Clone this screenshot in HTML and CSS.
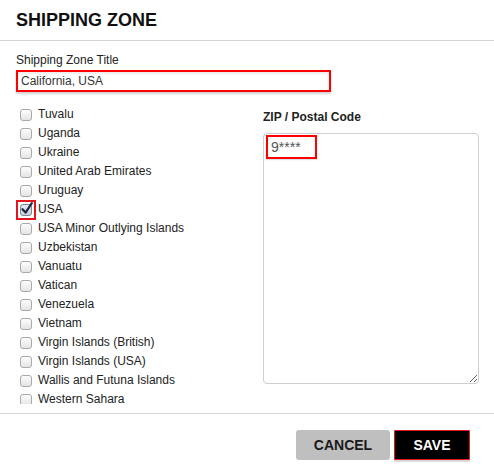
FILE: index.html
```html
<!DOCTYPE html>
<html>
<head>
<meta charset="utf-8">
<link rel="stylesheet" href="styles.css">
</head>
<body>
<div class="modal">
  <div class="header"><h1 class="title">SHIPPING ZONE</h1></div>
  <div class="body">
    <label class="field-label">Shipping Zone Title</label>
    <div class="text-input">California, USA</div>
    <div class="columns">
      <ul class="country-list">
        <li class="row"><span class="box"></span>Tuvalu</li>
        <li class="row"><span class="box"></span>Uganda</li>
        <li class="row"><span class="box"></span>Ukraine</li>
        <li class="row"><span class="box"></span>United Arab Emirates</li>
        <li class="row"><span class="box"></span>Uruguay</li>
        <li class="row"><span class="box checked"><span class="mark"></span><svg class="tick" width="14" height="14" viewBox="0 0 14 14"><path d="M2.5 7.2 L5.6 10.6 L11.8 1.2" fill="none" stroke="#1d2940" stroke-width="2.2" stroke-linecap="round" stroke-linejoin="round"/></svg></span>USA</li>
        <li class="row"><span class="box"></span>USA Minor Outlying Islands</li>
        <li class="row"><span class="box"></span>Uzbekistan</li>
        <li class="row"><span class="box"></span>Vanuatu</li>
        <li class="row"><span class="box"></span>Vatican</li>
        <li class="row"><span class="box"></span>Venezuela</li>
        <li class="row"><span class="box"></span>Vietnam</li>
        <li class="row"><span class="box"></span>Virgin Islands (British)</li>
        <li class="row"><span class="box"></span>Virgin Islands (USA)</li>
        <li class="row"><span class="box"></span>Wallis and Futuna Islands</li>
        <li class="row"><span class="box"></span>Western Sahara</li>
      </ul>
      <div class="zip-col">
        <div class="zip-label">ZIP / Postal Code</div>
        <div class="textarea"><span class="zip-entry">9****</span></div>
      </div>
    </div>
  </div>
  <div class="footer">
    <button class="btn btn-cancel">CANCEL</button>
    <button class="btn btn-save">SAVE</button>
  </div>
</div>
</body>
</html>
```

FILE: styles.css
```css
* { box-sizing: border-box; }
html, body { margin: 0; padding: 0; background: #fff; }
body {
  font-family: "Liberation Sans", Arial, sans-serif;
  color: #222;
  width: 494px;
  height: 476px;
  overflow: hidden;
}
.header {
  height: 41px;
  padding: 10px 16px;
  border-bottom: 1px solid #d4d4d4;
}
.title {
  margin: 0;
  font-size: 18px;
  line-height: 20px;
  font-weight: bold;
  color: #111;
}
.body {
  padding: 12px 15px 0 16px;
}
.field-label {
  display: block;
  font-size: 12px;
  line-height: 15px;
  color: #222;
}
.text-input {
  margin-top: 2px;
  width: 315px;
  height: 22px;
  border: 2px solid #f00;
  padding: 0 3px;
  font-size: 12px;
  line-height: 18px;
  color: #333;
  box-shadow: 0 2px 2px rgba(0,0,0,0.18), inset 0 2px 2px rgba(0,0,0,0.08);
}
.columns {
  margin-top: 12px;
  display: grid;
  grid-template-columns: 1fr 216px;
  column-gap: 10px;
}
.country-list {
  list-style: none;
  margin: 0;
  padding: 0;
  height: 300px;
  overflow: hidden;
}
.row {
  display: flex;
  align-items: center;
  height: 19px;
  font-size: 12px;
  color: #222;
}
.box {
  position: relative;
  flex: none;
  width: 12px;
  height: 12px;
  margin: 3px 6px 0 4px;
  border: 1px solid #a9a9a9;
  border-radius: 3px;
  background: linear-gradient(#fdfdfd, #e4e4e4);
}
.box.checked {
  background: linear-gradient(#e6e9ef, #c9d0dc);
  border-color: #7d8594;
}
.mark {
  position: absolute;
  left: -5px;
  top: -5px;
  width: 20px;
  height: 20px;
  border: 2px solid #e3141b;
}
.tick {
  position: absolute;
  left: -1px;
  top: -3px;
}
.zip-col {
  padding-top: 6px;
}
.zip-label {
  font-size: 12px;
  line-height: 15px;
  font-weight: bold;
  color: #222;
}
.textarea {
  margin-top: 8px;
  width: 216px;
  height: 251px;
  border: 1px solid #cfcfcf;
  border-radius: 4px;
  padding: 1px 2px;
  resize: both;
  overflow: auto;
}
.zip-entry {
  display: inline-block;
  width: 51px;
  height: 24px;
  border: 2px solid #f00;
  padding: 0 0 0 3px;
  font-size: 14px;
  line-height: 20px;
  color: #555;
  box-shadow: 0 1px 1px rgba(0,0,0,0.12);
}
.footer {
  margin-top: 9px;
  border-top: 1px solid #d4d4d4;
  padding: 16px 24px 16px 0;
  display: flex;
  justify-content: flex-end;
  gap: 4px;
}
.btn {
  height: 30px;
  border: none;
  border-radius: 3px;
  font-family: "Liberation Sans", Arial, sans-serif;
  font-size: 14px;
  font-weight: bold;
  padding: 0;
  cursor: pointer;
}
.btn-cancel {
  width: 94px;
  background: #bfbfbf;
  color: #1a1a1a;
}
.btn-save {
  width: 76px;
  background: #000;
  color: #fff;
  border: 1px solid #e3141b;
  border-radius: 1px;
  box-shadow: 0 2px 1px rgba(0,0,0,0.15);
}
```
